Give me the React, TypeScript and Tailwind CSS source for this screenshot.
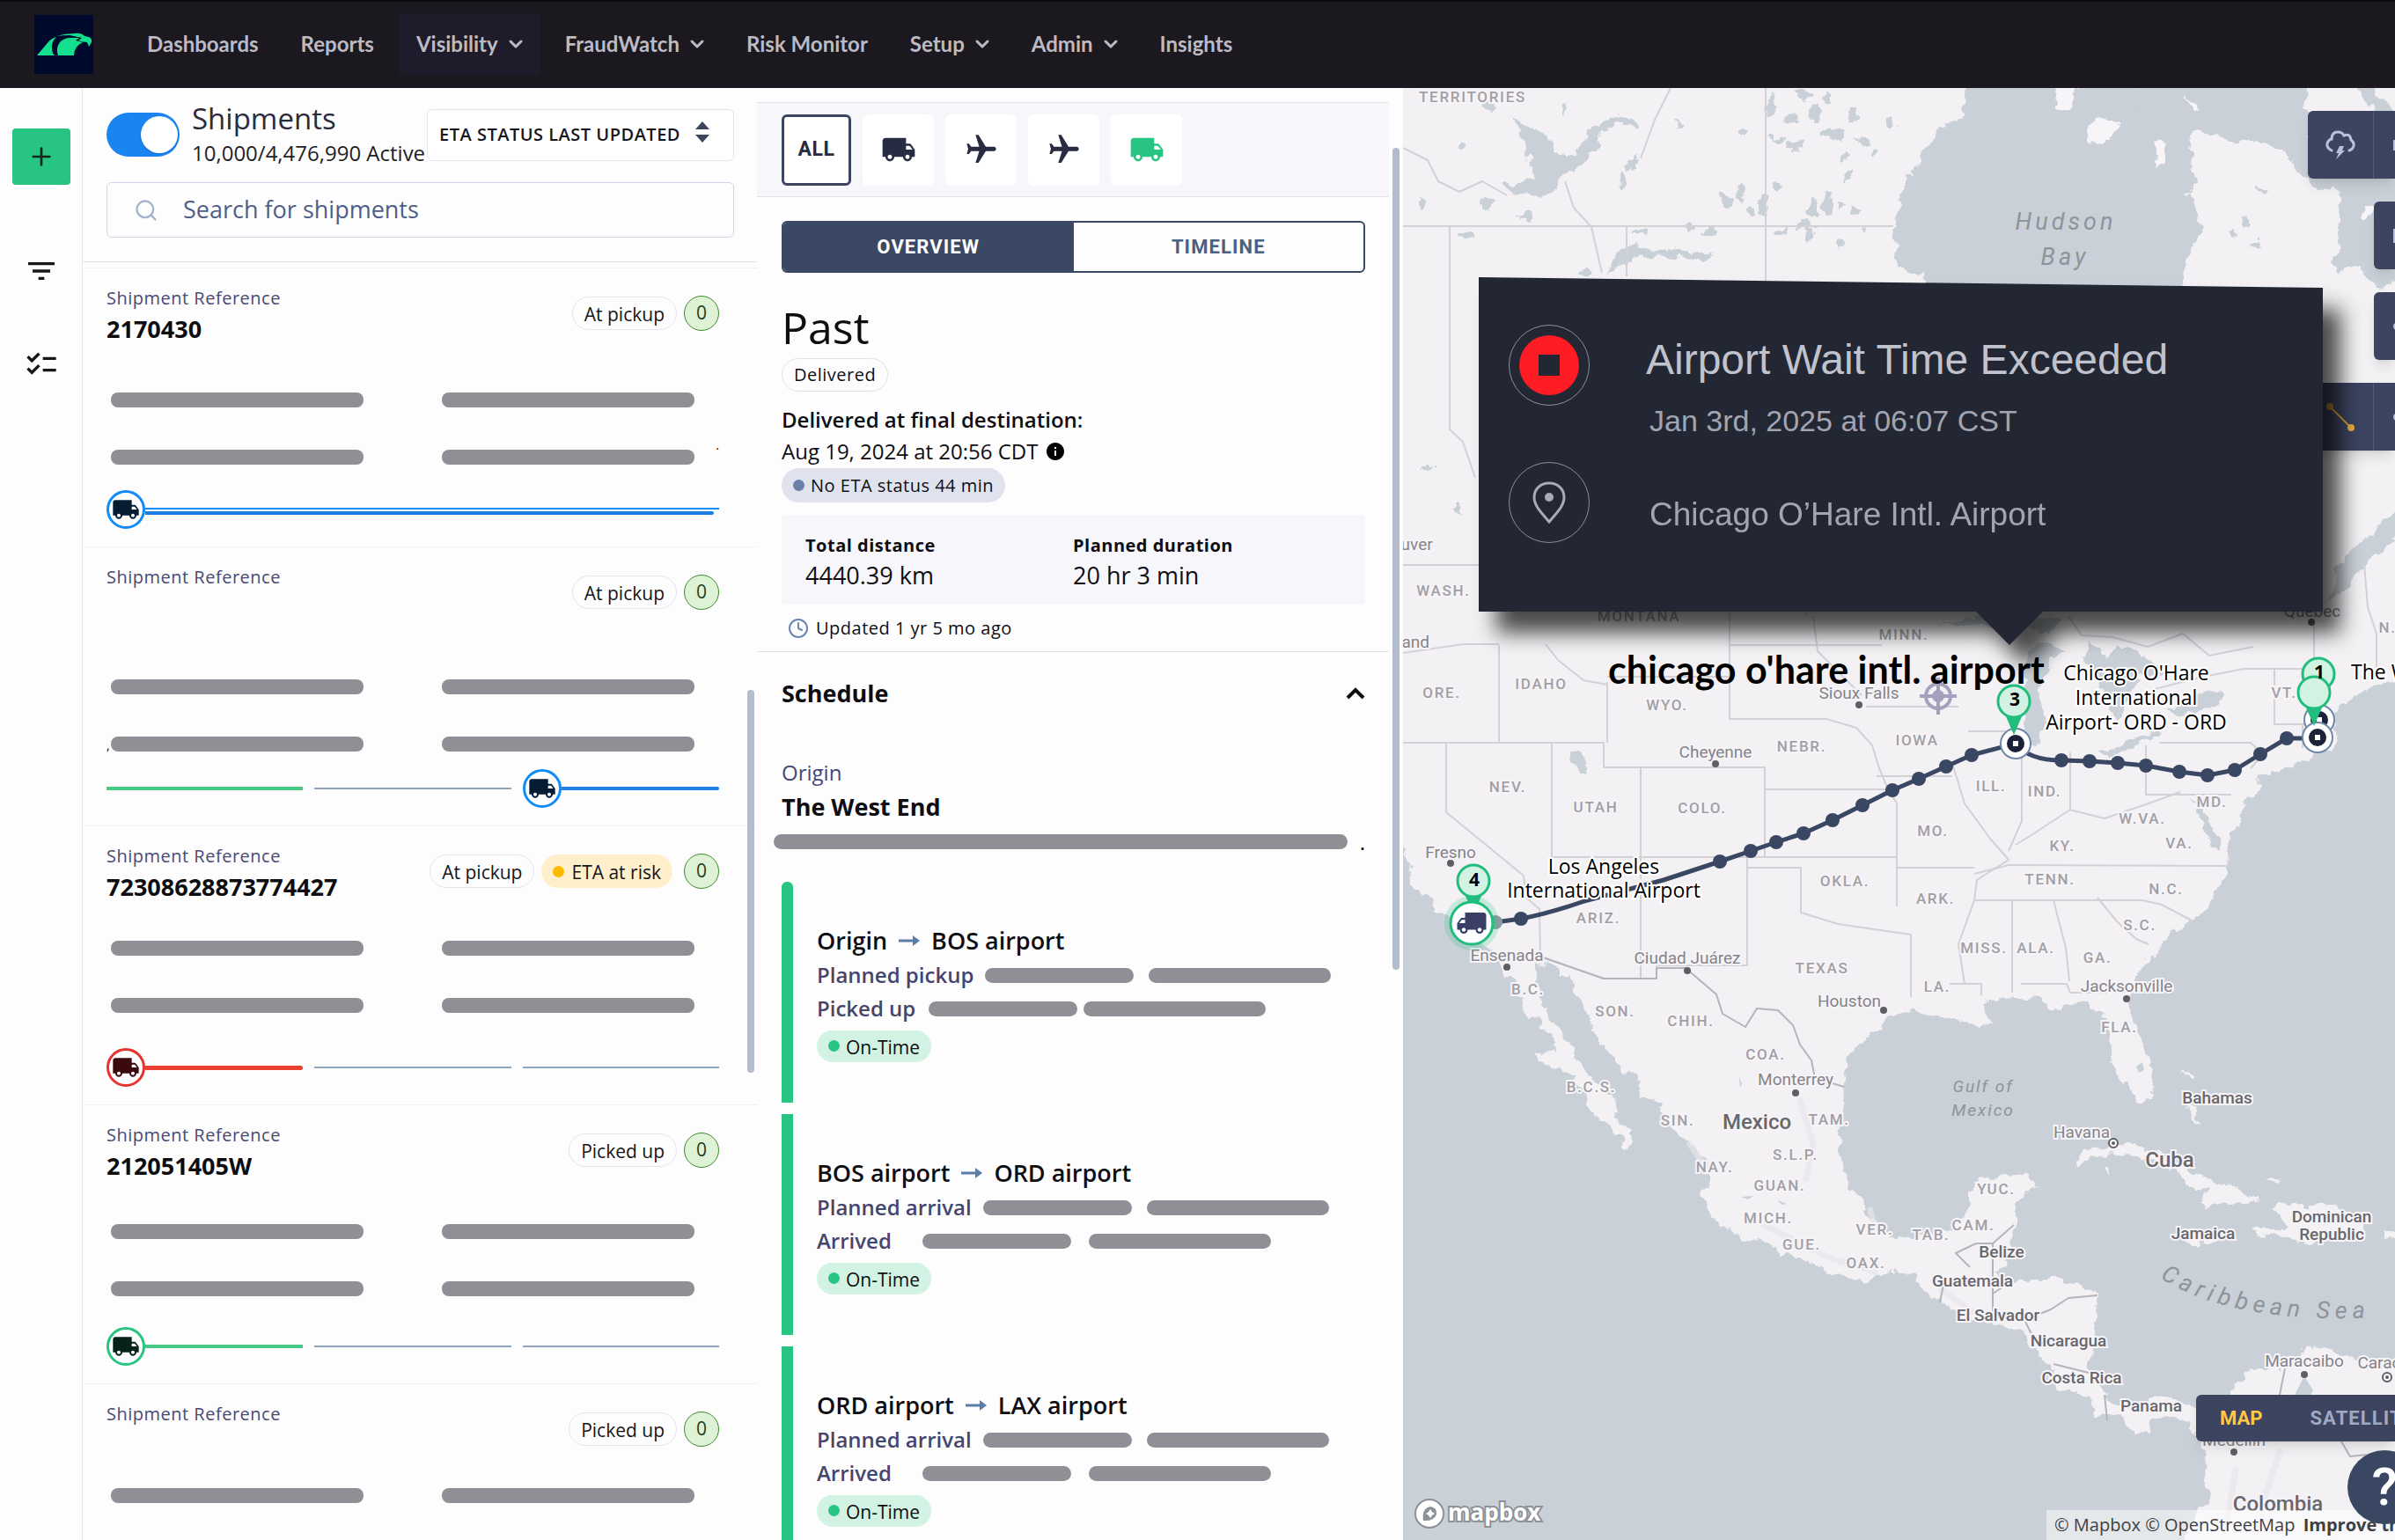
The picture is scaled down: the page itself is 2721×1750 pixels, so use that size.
import { ChevronDown, Clock4, Plus, Search } from 'lucide-react';
import { MdChecklist, MdFilterList, MdFlight, MdInfo, MdLocalShipping } from 'react-icons/md';

const navItems = [
  { label: 'Dashboards' },
  { label: 'Reports' },
  { label: 'Visibility', menu: true, active: true },
  { label: 'FraudWatch', menu: true },
  { label: 'Risk Monitor' },
  { label: 'Setup', menu: true },
  { label: 'Admin', menu: true },
  { label: 'Insights' },
];

type Tone = 'green' | 'blue' | 'blueDouble' | 'red' | 'idle';

const shipments: {
  id: string;
  status: string;
  risk?: boolean;
  offset: string;
  truckAt: number;
  truckRing: string;
  truckColor: string;
  segments: Tone[];
  lead?: string;
  tail?: string;
}[] = [
  {
    id: '2170430',
    status: 'At pickup',
    offset: 'mt-[54px]',
    truckAt: 0,
    truckRing: 'border-[#0f8cf8]',
    truckColor: 'text-[#051c33]',
    segments: ['blueDouble'],
    tail: '.',
  },
  {
    id: '',
    status: 'At pickup',
    offset: 'mt-[63px]',
    truckAt: 2,
    truckRing: 'border-[#0f8cf8]',
    truckColor: 'text-[#051c33]',
    segments: ['green', 'idle', 'blue'],
    lead: ',',
  },
  {
    id: '72308628873774427',
    status: 'At pickup',
    risk: true,
    offset: 'mt-[43px]',
    truckAt: 0,
    truckRing: 'border-[#e5332f]',
    truckColor: 'text-[#3a0a0e]',
    segments: ['red', 'idle', 'idle'],
  },
  {
    id: '212051405W',
    status: 'Picked up',
    offset: 'mt-[48px]',
    truckAt: 0,
    truckRing: 'border-[#28c481]',
    truckColor: 'text-[#06231b]',
    segments: ['green', 'idle', 'idle'],
  },
  {
    id: '',
    status: 'Picked up',
    offset: 'mt-[31px]',
    truckAt: 0,
    truckRing: 'border-[#28c481]',
    truckColor: 'text-[#06231b]',
    segments: ['green', 'idle', 'idle'],
  },
];

const legs = [
  {
    from: 'Origin',
    to: 'BOS airport',
    planned: 'Planned pickup',
    actual: 'Picked up',
    actualLabel: '',
    actualGap: 'gap-[7px]',
    round: 'rounded-t-md',
  },
  {
    from: 'BOS airport',
    to: 'ORD airport',
    planned: 'Planned arrival',
    actual: 'Arrived',
    actualLabel: 'min-w-[105px]',
    actualGap: 'gap-[20px]',
    round: '',
  },
  {
    from: 'ORD airport',
    to: 'LAX airport',
    planned: 'Planned arrival',
    actual: 'Arrived',
    actualLabel: 'min-w-[105px]',
    actualGap: 'gap-[20px]',
    round: '',
  },
];

function Logo() {
  return (
    <svg viewBox="0 0 67 67" className="h-[67px] w-[67px] bg-[#000a2c]" role="img" aria-label="Home">
      <path
        fill="#12e08e"
        d="M3 46 L14 33 Q18 27 25 25 Q19 31 20 38 Q20 43 23 46 Z M27 46 Q24 38 29 31 Q34 26 41 26 L51 26 L47 29 L55 31 Q45 36 45 46 Z M25 24 Q35 21 46 21 Q53 20 57 24 L62 25 Q66 27 65 31 L62 36 L60 31 Q55 31 50 29 L54 26 L40 23 Q32 23 25 24 Z"
      />
    </svg>
  );
}

function TopNav() {
  return (
    <header className="flex h-[100px] shrink-0 items-center bg-[#1b181f] pl-[39px] shadow-[inset_0_2px_0_#0c0b10]">
      <a href="#home" className="mr-[41px]">
        <Logo />
      </a>
      <nav className="flex items-center gap-2">
        {navItems.map((item) => (
          <a
            key={item.label}
            href={'#' + item.label}
            className={
              'flex h-[70px] items-center gap-2 rounded pl-5 font-[Lato,sans-serif] text-2xl font-bold text-[#bdbac4]' +
              (item.menu ? ' pr-4' : ' pr-5') +
              (item.active ? ' bg-[#1e1c2a]' : '')
            }
          >
            {item.label}
            {item.menu && <ChevronDown className="h-6 w-6" strokeWidth={3} />}
          </a>
        ))}
      </nav>
    </header>
  );
}

function Rail() {
  return (
    <aside className="flex flex-col items-center border-r border-[#e6e7ee] pt-[46px]">
      <button aria-label="Add" className="flex h-16 w-[66px] items-center justify-center rounded bg-[#28c481] text-[#12291f]">
        <Plus className="h-8 w-8" strokeWidth={2} />
      </button>
      <button aria-label="Filter" className="mt-[78px] text-[#17171b]">
        <MdFilterList className="h-10 w-10" />
      </button>
      <button aria-label="Tasks" className="mt-[66px] text-[#17171b]">
        <MdChecklist className="h-10 w-10" />
      </button>
    </aside>
  );
}

function Segment({ tone }: { tone: Tone }) {
  if (tone === 'idle') return <div className="h-[2px] flex-1 bg-[#5f7fa3]/70" />;
  if (tone === 'green') return <div className="h-1 flex-1 bg-[#45c985]" />;
  if (tone === 'red') return <div className="h-[5px] flex-1 rounded-r bg-[#ea3f31]" />;
  if (tone === 'blue') return <div className="h-1 flex-1 rounded-r bg-[#1f83e4]" />;
  return (
    <div className="flex flex-1 flex-col gap-[2px] pt-[3px]">
      <div className="h-[2px] bg-[#0f8cf8]" />
      <div className="mr-[6px] h-1 rounded-r bg-[#1a7fe4]" />
    </div>
  );
}

function ShipmentItem({ item }: { item: (typeof shipments)[number] }) {
  return (
    <li className="flex min-h-[317px] flex-col border-t border-[#f1f1f5] pt-5 pr-[43px] pb-[20px] pl-[27px]">
      <div className="flex min-h-[67px] items-start justify-between">
        <div>
          <div className="text-xl leading-7 tracking-wide text-[#4b4a74]">Shipment Reference</div>
          <div className="mt-[3px] text-[27px] leading-9 font-bold text-[#0d0d10]">{item.id}</div>
        </div>
        <div className="mt-[11px] flex items-center gap-2 text-[21px] text-[#151518]">
          <span className="flex h-[38px] items-center rounded-full border border-[#e3e4ee] px-[13px] pt-1">{item.status}</span>
          {item.risk && (
            <span className="mr-[5px] flex h-[38px] items-center gap-2 rounded-full bg-[#fff0cb] px-[13px] pt-1">
              <span className="mb-1 h-[13px] w-[13px] rounded-full bg-[#ffb800]" />
              ETA at risk
            </span>
          )}
          <span className="flex h-10 w-10 items-center justify-center rounded-full border border-[#3f8a2c] bg-[#def3d6] text-[#1f3d1b]">
            0
          </span>
        </div>
      </div>
      <div className={'flex flex-col gap-12 ' + item.offset}>
        {[0, 1].map((row) => (
          <div key={row} className="flex h-[17px] items-end">
            <span className="w-[5px] text-sm leading-none">{row === 1 && item.lead}</span>
            <div className="h-full flex-1 rounded-lg bg-[#918f95]" />
            <div className="w-[89px]" />
            <div className="h-full flex-1 rounded-lg bg-[#918f95]" />
            <span className="w-[28px] -translate-y-3 self-start text-right text-sm leading-none">{row === 1 && item.tail}</span>
          </div>
        ))}
      </div>
      <div className="mt-auto flex h-11 gap-[13px]">
        {item.segments.map((tone, i) => (
          <div key={i} className="flex flex-1 items-center">
            {item.truckAt === i && (
              <span className={'flex h-11 w-11 shrink-0 items-center justify-center rounded-full border-[3px] bg-white ' + item.truckRing}>
                <MdLocalShipping className={'h-8 w-8 ' + item.truckColor} />
              </span>
            )}
            <Segment tone={tone} />
          </div>
        ))}
      </div>
    </li>
  );
}

function ShipmentsPanel() {
  return (
    <section className="relative flex min-h-0 flex-col overflow-hidden">
      <div className="border-b border-[#dfe1ec] pt-[13px] pr-[26px] pb-[27px] pl-[27px]">
        <div className="flex items-center">
          <label className="shrink-0 cursor-pointer">
            <input type="checkbox" role="switch" aria-label="Shipments" defaultChecked className="peer sr-only" />
            <span className="flex h-[50px] w-[83px] items-center justify-end rounded-full bg-[#1a84f0] px-[2px]">
              <span className="h-[42px] w-[42px] rounded-full bg-white shadow" />
            </span>
          </label>
          <div className="ml-[14px] whitespace-nowrap">
            <h1 className="pt-[2px] text-[33px] leading-10 text-[#2b2b3c]">Shipments</h1>
            <div className="text-[24px] leading-[38px] text-[#1f1f25]">10,000/4,476,990 Active</div>
          </div>
          <div className="relative ml-auto w-[349px]">
            <select
              aria-label="Sort order"
              className="h-[59px] w-full appearance-none rounded-md border border-[#e1e3ee] bg-white pl-[13px] text-xl font-semibold tracking-wide text-[#16161c]"
            >
              <option>ETA STATUS LAST UPDATED</option>
            </select>
            <svg viewBox="0 0 16 24" className="pointer-events-none absolute top-[14px] right-7 h-6 w-4 fill-[#3b4560]">
              <path d="M8 0 L16 9 H0 Z M8 24 L16 15 H0 Z" />
            </svg>
          </div>
        </div>
        <label className="mt-[14px] flex h-[63px] items-center rounded-md border border-[#cfd5e6] pl-[30px]">
          <Search className="h-7 w-7 text-[#a3b3cc]" />
          <input
            type="search"
            aria-label="Search for shipments"
            placeholder="Search for shipments"
            className="ml-[28px] flex-1 bg-transparent text-[27px] outline-none placeholder:text-[#4d5f88]"
          />
        </label>
      </div>
      <ul className="pt-[6px]">
        {shipments.map((item, i) => (
          <ShipmentItem key={i} item={item} />
        ))}
      </ul>
      <div className="absolute top-[684px] right-[3px] h-[435px] w-2 rounded-full bg-[#b3bdcf]" />
    </section>
  );
}

function Arrow() {
  return (
    <svg viewBox="0 0 24 12" className="h-3 w-6">
      <path d="M0 6 H18" stroke="#5b7ca6" strokeWidth="3" />
      <path d="M16 0 L24 6 L16 12 Z" fill="#5b7ca6" />
    </svg>
  );
}

function DetailPanel() {
  const modeButton = 'flex h-[81px] w-[81px] items-center justify-center rounded-md bg-white text-[#272c42]';
  return (
    <section className="relative min-h-0 overflow-hidden pt-4 pr-4 text-[#0e0e12]">
      <div className="flex h-[108px] items-center gap-[13px] border-y border-[#e2e3eb] bg-[#f6f6fb] pl-7">
        <button className="h-[81px] w-[79px] rounded-md border-[3px] border-[#3b4560] bg-white font-[Roboto,sans-serif] text-[23px] font-bold tracking-wide text-[#272c42]">
          ALL
        </button>
        <button aria-label="Truck leg" className={modeButton}>
          <MdLocalShipping className="h-10 w-10" />
        </button>
        <button aria-label="First flight" className={modeButton}>
          <MdFlight className="h-10 w-10 rotate-90" />
        </button>
        <button aria-label="Second flight" className={modeButton}>
          <MdFlight className="h-10 w-10 rotate-90" />
        </button>
        <button aria-label="Final truck leg" className={modeButton}>
          <MdLocalShipping className="h-10 w-10 text-[#28c481]" />
        </button>
      </div>

      <div className="pr-[27px] pl-7">
        <div className="mt-[27px] flex h-[59px] overflow-hidden rounded-md border-2 border-[#3b4863] font-[Roboto,sans-serif] text-[22px] font-bold tracking-wider">
          <button className="flex-1 bg-[#3b4863] text-white">OVERVIEW</button>
          <button className="flex-1 text-[#4b6083]">TIMELINE</button>
        </div>

        <h2 className="mt-8 text-[50px] leading-[60px]">Past</h2>
        <span className="mt-[5px] flex h-[38px] w-fit items-center rounded-full border border-[#e0e1ea] px-[13px] text-xl tracking-wide">
          Delivered
        </span>
        <div className="mt-[14px] text-[24px] leading-9 font-semibold">Delivered at final destination:</div>
        <div className="flex items-center gap-2 text-[24px] leading-9">
          Aug 19, 2024 at 20:56 CDT
          <MdInfo className="h-6 w-6 text-black" />
        </div>
        <span className="mt-px flex h-[39px] w-fit items-center gap-[7px] rounded-full bg-[#e0e2ed] px-[13px] text-xl tracking-wide">
          <span className="h-[13px] w-[13px] rounded-full bg-[#6a80a8]" />
          No ETA status 44 min
        </span>

        <dl className="mt-[14px] grid grid-cols-[304fr_332fr] rounded bg-[#f6f6fb] py-[17px] pl-[27px]">
          <div>
            <dt className="text-xl leading-9 font-bold tracking-wide">Total distance</dt>
            <dd className="text-[27px] leading-8">4440.39 km</dd>
          </div>
          <div>
            <dt className="text-xl leading-9 font-bold tracking-wide">Planned duration</dt>
            <dd className="text-[27px] leading-8">20 hr 3 min</dd>
          </div>
        </dl>
        <div className="mt-[10px] flex items-center gap-2 pb-[9px] pl-[7px] text-xl leading-[34px] tracking-wide">
          <Clock4 className="h-6 w-6 text-[#6a86b0]" />
          Updated 1 yr 5 mo ago
        </div>
      </div>

      <div className="border-t border-[#e0e2ea] pr-[27px] pl-7">
        <div className="mt-[27px] flex items-center justify-between">
          <h3 className="text-[27px] leading-10 font-bold">Schedule</h3>
          <button aria-label="Collapse schedule">
            <svg viewBox="0 0 22 14" className="h-[14px] w-[22px]">
              <path d="M2 12 L11 3 L20 12" fill="none" stroke="#0e0e12" strokeWidth="4" />
            </svg>
          </button>
        </div>
        <div className="mt-[52px] text-[24px] leading-9 text-[#47467a]">Origin</div>
        <div className="text-[27px] leading-[42px] font-bold">The West End</div>
        <div className="-ml-[9px] flex h-[28px] items-center gap-[14px] pt-[9px]">
          <div className="h-[17px] flex-1 rounded-full bg-[#918f95]" />
          <span className="text-2xl leading-5">.</span>
        </div>

        <ol className="mt-9 flex flex-col gap-[13px]">
          {legs.map((leg) => (
            <li key={leg.to} className="flex min-h-[251px]">
              <div className={'w-[13px] bg-[#28c481] ' + leg.round} />
              <div className="ml-[27px] pt-[47px]">
                <div className="flex items-center gap-[13px] text-[27px] leading-10 font-semibold">
                  {leg.from}
                  <Arrow />
                  {leg.to}
                </div>
                <div className="flex items-center text-[24px] leading-[38px] font-semibold text-[#45456d]">
                  {leg.planned}
                  <div className="ml-[13px] h-[17px] w-[169px] rounded-full bg-[#918f95]" />
                  <div className="ml-[17px] h-[17px] w-[207px] rounded-full bg-[#918f95]" />
                </div>
                <div className="flex items-center gap-[15px] text-[24px] leading-[38px] font-semibold text-[#45456d]">
                  <span className={leg.actualLabel}>{leg.actual}</span>
                  <span className={'flex ' + leg.actualGap}>
                    <span className="h-[17px] w-[169px] rounded-full bg-[#918f95]" />
                    <span className="h-[17px] w-[207px] rounded-full bg-[#918f95]" />
                  </span>
                </div>
                <span className="mt-[6px] flex h-9 w-fit items-center gap-[7px] rounded-full bg-[#d2f3e4] px-[13px] pt-[3px] text-[21px]">
                  <span className="mb-1 h-[13px] w-[13px] rounded-full bg-[#28c481]" />
                  On-Time
                </span>
              </div>
            </li>
          ))}
        </ol>
      </div>
      <div className="absolute top-[68px] right-1 h-[934px] w-2 rounded-full bg-[#b1bdcc]" />
    </section>
  );
}

type Place = [string, number, number];

const stateLabels: Place[] = [
  ['TERRITORIES', 1673, 110], ['WASH.', 1640, 671], ['MONTANA', 1862, 700], ['MINN.', 2163, 721],
  ['ORE.', 1638, 787], ['IDAHO', 1751, 777], ['WYO.', 1894, 801], ['NEV.', 1713, 894],
  ['UTAH', 1813, 917], ['COLO.', 1934, 918], ['NEBR.', 2047, 848], ['IOWA', 2178, 841],
  ['ILL.', 2262, 893], ['IND.', 2323, 899], ['MO.', 2196, 944],
  ['OKLA.', 2096, 1001], ['ARK.', 2199, 1021], ['TENN.', 2329, 999], ['KY.', 2343, 961],
  ['W.VA.', 2434, 930], ['VA.', 2476, 958], ['MD.', 2513, 911], ['N.C.', 2461, 1010],
  ['S.C.', 2431, 1051], ['GA.', 2383, 1088], ['ALA.', 2313, 1077], ['MISS.', 2254, 1077],
  ['ARIZ.', 1816, 1043], ['TEXAS', 2070, 1100], ['VT.', 2595, 787], ['N.B.', 2722, 713],
  ['B.C.', 1736, 1124], ['SON.', 1835, 1149], ['CHIH.', 1921, 1160], ['COA.', 2006, 1198],
  ['LA.', 2201, 1121], ['FLA.', 2408, 1167], ['B.C.S.', 1808, 1235], ['SIN.', 1906, 1273],
  ['TAM.', 2078, 1272], ['S.L.P.', 2040, 1312], ['NAY.', 1948, 1326], ['GUAN.', 2022, 1347],
  ['MICH.', 2009, 1384], ['GUE.', 2047, 1414], ['VER.', 2130, 1397], ['TAB.', 2194, 1403],
  ['OAX.', 2120, 1435], ['YUC.', 2268, 1351], ['CAM.', 2242, 1392],
];

const cityLabels: Place[] = [
  ['Cheyenne', 1949, 854], ['Sioux Falls', 2112, 787], ['Fresno', 1648, 968], ['Ensenada', 1712, 1085],
  ['Ciudad Juárez', 1917, 1088], ['Jacksonville', 2416, 1120], ['Houston', 2101, 1137],
  ['Monterrey', 2040, 1226], ['Havana', 2365, 1286], ['Maracaibo', 2618, 1546], ['Caracas', 2713, 1548],
  ['Medellín', 2538, 1636], ['Vancouver', 1583, 618], ['Portland', 1588, 729], ['Québec', 2627, 694],
];

const cityDots = [
  [1949, 868], [2112, 801], [1648, 981], [1712, 1099], [1917, 1103], [2416, 1135],
  [2140, 1148], [2040, 1242], [2618, 1562], [2538, 1650], [2626, 707],
];

const countryLabels: Place[] = [
  ['Bahamas', 2519, 1247], ['Dominican', 2649, 1382], ['Republic', 2649, 1402], ['Jamaica', 2503, 1401],
  ['Belize', 2274, 1422], ['Guatemala', 2241, 1455], ['El Salvador', 2270, 1494],
  ['Nicaragua', 2350, 1523], ['Costa Rica', 2365, 1565], ['Panama', 2444, 1597],
];

const bigCountryLabels: Place[] = [['Mexico', 1996, 1275], ['Cuba', 2465, 1318], ['Colombia', 2588, 1709]];

const routeStops = [
  [1728, 1044], [1954, 979], [1989, 967], [2018, 957], [2049, 947], [2082, 932], [2116, 915],
  [2150, 898], [2180, 885], [2211, 871], [2240, 858], [2342, 864], [2374, 865], [2406, 867],
  [2438, 870], [2476, 877], [2508, 881], [2539, 875], [2568, 857], [2598, 839],
];

// x, y, width, height of the small northern lakes
const lakes = [
  [1662, 167, 10, 8], [1690, 120, 20, 12], [1616, 234, 9, 16], [1690, 230, 18, 16], [1734, 247, 18, 12],
  [1666, 268, 16, 10], [1779, 125, 6, 20], [1908, 143, 12, 12], [1979, 148, 10, 10], [2012, 122, 18, 30],
  [2035, 135, 20, 12], [2050, 108, 24, 10], [2062, 130, 16, 22], [2082, 152, 30, 16], [2040, 165, 26, 14],
  [2020, 158, 22, 8], [2105, 130, 10, 24], [2116, 160, 14, 10], [2150, 140, 12, 14], [2098, 178, 12, 10],
  [2076, 110, 10, 16], [2100, 198, 8, 22], [2130, 175, 10, 8], [1962, 226, 18, 20], [1979, 222, 8, 30],
  [2003, 232, 16, 30], [2020, 214, 14, 12], [1990, 240, 10, 12], [2060, 238, 16, 26], [2076, 232, 10, 30],
  [2050, 256, 22, 12], [2092, 236, 12, 8], [2024, 262, 18, 10], [1920, 258, 14, 12], [1865, 265, 16, 9],
  [2118, 262, 8, 12], [2108, 240, 12, 8], [1940, 262, 18, 8], [1844, 205, 9, 26], [1855, 185, 12, 24],
  [1802, 310, 16, 12], [2055, 266, 10, 14], [2090, 274, 8, 14], [2550, 254, 12, 14], [2562, 278, 20, 12],
  [2570, 218, 14, 8], [2540, 265, 9, 12], [2430, 110, 12, 16], [1622, 531, 12, 10], [1656, 578, 12, 16],
];

function lakePoints([x, y, w, h]: number[]) {
  const steps = 11;
  return Array.from({ length: steps }, (_, i) => {
    const angle = (i / steps) * Math.PI * 2;
    const wobble = 0.6 + 0.4 * Math.abs(Math.sin(x * 1.7 + y * 0.9 + i * 2.3));
    return `${Math.round(x + (Math.cos(angle) * w * wobble) / 2)},${Math.round(y + (Math.sin(angle) * h * wobble) / 2)}`;
  }).join(' ');
}

function Labels({ places, className }: { places: Place[]; className: string }) {
  return (
    <g className={className}>
      {places.map(([name, x, y]) => (
        <text key={name} x={x} y={y} textAnchor="middle" dominantBaseline="central">
          {name}
        </text>
      ))}
    </g>
  );
}

function Pin({ x, y }: { x: number; y: number }) {
  return (
    <g>
      <path d={`M${x - 10} ${y + 15} L${x} ${y + 38} L${x + 10} ${y + 15} Z`} fill="#20bd7c" />
      <circle cx={x} cy={y} r="18" fill="#d2f3e4" stroke="#20bd7c" strokeWidth="3" />
    </g>
  );
}

function StopMarker({ x, y }: { x: number; y: number }) {
  return (
    <g>
      <circle cx={x} cy={y} r="17" fill="#fff" stroke="#7088a8" strokeWidth="2" />
      <circle cx={x} cy={y} r="10" fill="#1c2238" />
      <rect x={x - 3} y={y - 3} width="6" height="6" fill="#fff" />
    </g>
  );
}

function MapCanvas() {
  return (
    <svg viewBox="1594 100 1127 1650" preserveAspectRatio="xMinYMin slice" className="h-full w-full bg-[#f3f1f4]">
      {/* Gives the coastlines their ragged edge */}
      <filter id="coast" x="-5%" y="-5%" width="110%" height="110%">
        <feTurbulence type="fractalNoise" baseFrequency="0.07" numOctaves="4" seed="4" />
        <feDisplacementMap in="SourceGraphic" scale="16" xChannelSelector="R" yChannelSelector="G" />
      </filter>

      {/* Northern water */}
      <g fill="#c9d0d7" filter="url(#coast)">
        <path d="M2236 80 L2232 128 L2214 141 L2203 151 L2185 168 L2178 188 L2167 204 L2158 225 L2153 249 L2153 274 L2156 306 L2185 310 L2189 330 L2481 330 L2479 310 L2488 286 L2502 261 L2492 233 L2484 221 L2495 208 L2493 188 L2487 168 L2492 151 L2520 155 L2542 163 L2571 159 L2580 166 L2590 168 L2606 185 L2617 203 L2635 214 L2660 217 L2658 240 L2656 262 L2658 287 L2650 306 L2656 312 L2664 302 L2680 302 L2692 318 L2702 327 L2740 313 L2740 200 L2680 200 L2624 170 L2624 128 L2616 118 L2622 108 L2610 80 Z" />
        <path d="M2664 80 L2690 90 L2712 118 L2721 136 L2700 128 L2686 112 Z" />
        <path d="M1716 129 L1734 143 L1760 157 L1763 174 L1788 174 L1806 151 L1821 137 L1842 132 L1864 139 L1864 146 L1838 140 L1817 151 L1814 172 L1792 192 L1770 204 L1767 217 L1745 223 L1716 219 L1705 210 L1745 204 L1738 180 L1727 155 Z" />
        <path d="M1824 312 L1832 294 L1850 274 L1868 282 L1925 286 L1945 288 L1934 294 L1871 292 L1842 300 Z" />
        {lakes.map((lake) => (
          <polygon key={lake.join()} points={lakePoints(lake)} />
        ))}
      </g>
      <g fill="#f7f5f7" filter="url(#coast)">
        <path d="M2333 90 H2361 L2350 125 L2339 122 Z" />
        <path d="M2480 110 L2497 122 L2490 126 Z" />
        <path d="M2380 135 L2394 133 L2409 138 L2402 151 L2384 167 L2372 160 L2372 150 Z" />
        <path d="M2449 158 L2463 163 L2460 184 L2451 192 L2446 176 Z" />
        <path d="M2686 234 L2694 236 L2692 246 L2684 248 Z" />
      </g>

      {/* Oceans and the Great Lakes */}
      <g fill="#c9d0d7" filter="url(#coast)">
        <path d="M1570 950 L1594 960 L1601 985 L1606 1010 L1626 1023 L1630 1037 L1650 1042 L1669 1053 L1690 1077 L1709 1100 L1720 1132 H1570 Z" />
        <path d="M1745 1095 L1770 1100 L1783 1130 H1745 Z" />
        <path d="M2750 768 L2694 782 L2672 790 L2657 807 L2650 823 L2654 843 L2648 852 L2630 857 L2608 870 L2578 880 L2567 882 L2565 897 L2553 913 L2546 933 L2535 947 L2531 970 L2530 990 L2520 1007 L2513 1020 L2492 1047 L2474 1053 L2456 1073 L2438 1093 L2423 1110 V1132 H2750 Z" />
        <path d="M2301 753 L2311 735 L2328 733 L2346 737 L2332 747 L2325 763 L2318 773 L2315 793 L2321 807 L2323 823 L2318 840 L2309 850 L2299 840 L2301 820 Z" />
        <path d="M2200 708 L2250 700 L2340 702 L2330 716 L2270 712 Z" />
        <path d="M2373 727 L2394 747 L2404 733 L2428 740 L2439 750 L2466 760 L2456 770 L2432 768 L2415 800 L2408 820 L2394 797 L2384 770 L2368 748 Z" />
        <path d="M2384 853 L2401 850 L2421 840 L2449 830 L2452 835 L2435 843 L2418 853 L2404 860 L2390 858 Z" />
        <path d="M2463 807 L2480 797 L2508 785 L2525 787 L2525 800 L2501 807 L2473 812 Z" />
        <path d="M1783 853 L1796 857 L1803 873 L1796 882 L1785 867 Z" />
        <path d="M2490 908 L2501 917 L2508 933 L2521 953 L2526 968 L2514 962 L2503 940 Z" />
        <path d="M2655 640 L2680 618 L2740 566 V596 L2690 640 L2668 664 L2648 684 Z" />
        <rect x="1570" y="1110" width="1180" height="670" />
      </g>

      {/* Mexico, Central America and the Caribbean */}
      <g fill="#f3f1f4" filter="url(#coast)">
        <path d="M1709 1090 L1723 1121 L1731 1146 L1745 1158 L1763 1179 L1767 1195 L1745 1196 L1756 1210 L1774 1214 L1785 1224 L1803 1237 L1806 1262 L1821 1274 L1839 1291 L1846 1304 L1855 1295 L1853 1282 L1835 1270 L1832 1249 L1817 1233 L1806 1224 L1792 1204 L1779 1179 L1759 1154 L1749 1133 L1745 1090 Z" />
        <path d="M1781 1090 L1788 1125 L1799 1146 L1814 1179 L1828 1193 L1842 1216 L1864 1228 L1862 1243 L1886 1253 L1889 1270 L1911 1291 L1933 1311 L1943 1336 L1943 1347 L1933 1359 L1943 1382 L1972 1403 L2005 1411 L2030 1425 L2059 1436 L2088 1450 L2120 1456 L2142 1446 L2153 1444 L2174 1452 L2196 1473 L2225 1492 L2261 1508 L2293 1508 L2301 1515 L2311 1535 L2333 1556 L2340 1577 L2376 1589 L2380 1606 L2391 1612 L2409 1610 L2427 1631 L2445 1628 L2441 1614 L2466 1610 L2484 1614 L2495 1635 L2506 1651 L2505 1680 L2510 1697 L2495 1718 L2464 1780 H2750 V1548 L2686 1544 L2658 1539 L2621 1527 L2611 1548 L2585 1554 L2557 1556 L2539 1573 L2535 1593 L2520 1614 L2492 1597 L2466 1585 L2441 1591 L2412 1602 L2391 1585 L2373 1560 L2376 1531 L2380 1494 L2383 1471 L2365 1461 L2333 1452 L2282 1456 L2268 1448 L2282 1427 L2286 1403 L2293 1390 L2293 1369 L2300 1357 L2311 1345 L2308 1334 L2282 1333 L2246 1340 L2239 1353 L2236 1374 L2218 1398 L2181 1405 L2153 1407 L2124 1382 L2117 1365 L2095 1336 L2089 1307 L2091 1266 L2095 1241 L2099 1224 L2095 1204 L2117 1183 L2138 1166 L2145 1154 L2167 1146 L2203 1154 L2225 1162 L2264 1164 L2254 1150 L2257 1137 L2282 1133 L2319 1135 L2326 1146 L2355 1141 L2373 1139 L2387 1154 L2394 1175 L2398 1199 L2412 1228 L2430 1253 L2443 1249 L2447 1220 L2441 1199 L2423 1158 L2418 1137 L2420 1117 L2430 1090 Z" />
        <path d="M2355 1326 L2365 1311 L2391 1305 L2409 1299 L2441 1303 L2470 1320 L2492 1332 L2520 1345 L2564 1361 L2557 1367 L2499 1369 L2506 1353 L2481 1345 L2474 1328 L2434 1316 L2398 1311 L2376 1316 L2362 1324 Z" />
        <path d="M2582 1371 L2600 1369 L2650 1369 L2686 1386 L2690 1403 L2658 1407 L2621 1415 L2600 1405 L2564 1403 L2560 1396 L2600 1396 Z" />
        <path d="M2474 1405 L2506 1403 L2528 1410 L2492 1415 Z" />
        <path d="M2708 1399 H2740 V1409 L2708 1408 Z" />
        <path d="M2484 1256 L2492 1258 L2497 1280 L2490 1272 Z M2390 1325 L2396 1327 L2393 1334 Z M2476 1220 L2490 1219 L2488 1224 Z M2577 1343 L2587 1337 L2585 1345 Z" />
      </g>
      <g fill="#c9d0d7">
        <path d="M2618 1564 L2628 1580 L2621 1593 L2607 1585 Z" />
        <path d="M2427 1212 L2434 1207 L2436 1216 L2430 1219 Z M1976 1224 L1979 1232 L1977 1236 Z M1978 1360 L1992 1359 L1986 1363 Z M2020 1364 L2030 1368 L2024 1369 Z" />
      </g>

      {/* Relief */}
      <g fill="none" stroke="#e7e5e9" strokeWidth="7" strokeLinecap="round" opacity="0.7">
        <path d="M1920 1300 L1940 1330 M2045 1250 L2060 1300 L2052 1340 M2000 1390 L2080 1430 L2130 1445 M2125 1375 L2130 1400 M2205 1465 L2240 1490 L2290 1500 M2540 1670 L2530 1730 M2590 1650 L2570 1710" />
      </g>

      {/* Borders and rivers */}
      <g fill="none" stroke="#d3d1d6" strokeWidth="2" strokeLinejoin="round">
        <path d="M1594 257 H2151 M2006 100 V319 M1848 257 V314 M1647 257 V488 L1662 502 L1676 543 M1594 642 H1680" />
        <path d="M1594 168 L1622 182 L1634 206 L1658 218 L1684 206 L1712 222 M1778 206 L1788 236 L1808 258 L1820 310 M1898 100 L1880 136 L1864 180" />
        <path d="M1594 742 L1662 732 H1703 M1703 733 V844 M1594 844 H1822 V872 H2005 V897 H2145 M1756 732 L1770 750 L1799 773 L1826 778 M1826 769 H1965 M1826 775 V844" />
        <path d="M1965 695 V817 H2075 L2109 827 L2127 847 L2135 873 L2145 897 L2155 913 V975 M1965 733 H2138 M1763 844 V974 H2155 M1864 872 V1112 M2005 897 V974" />
        <path d="M1643 844 V923 L1731 995 L1734 1020 L1749 1033 L1750 1087 M1985 975 V1097 H1882 V1112 H1822 L1750 1087 M1985 986 H2046 V1037 L2088 1050 L2171 1062 V1133" />
        <path d="M2155 975 V1030 M2155 986 H2243 M2120 803 H2225 M2132 882 H2218 M2236 831 H2300 M2218 867 L2232 913 L2261 953 L2282 977 L2246 1000 L2243 1023 L2225 1073 L2232 1118" />
        <path d="M2243 1023 H2434 L2456 1028 L2492 1047 M2286 1023 V1128 M2333 1023 L2347 1077 L2351 1115 M2383 1020 L2405 1047 L2427 1067 L2441 1073 M2243 993 L2282 983 L2530 984" />
        <path d="M2297 857 V933 L2282 967 M2352 855 V920 L2311 947 L2290 960 M2351 920 L2391 930 L2441 913 L2477 900 M2438 847 V903 H2535 M2453 844 H2557 L2571 857 L2557 873" />
        <path d="M2448 783 L2499 770 L2549 760 H2629 V700 M2584 760 V823 H2622 M2616 823 V850 M2350 700 L2365 722 L2400 724 L2440 735 L2480 720 L2510 745 L2560 735 M2686 640 L2690 690 L2700 720 V760" />
        <path d="M2215 1118 H2251 V1131 M2296 1118 H2348 L2352 1128 H2398 M2060 700 L2065 740 L2115 790 M2040 640 L2052 700" />
      </g>
      <g fill="none" stroke="#b5b4ba" strokeWidth="2" strokeLinejoin="round">
        <path d="M1750 1087 L1822 1112 H1882 V1100 H1915 L1950 1130 L1957 1152 L1983 1167 L1996 1146 L2020 1148 L2037 1165 L2045 1187 L2058 1205 L2062 1225 L2095 1235" />
        <path d="M2245 1413 H2264 V1490 M2264 1413 L2288 1392 M2245 1413 L2222 1424 L2238 1440 M2204 1480 L2208 1460 M2264 1470 L2282 1458 M2300 1500 L2330 1488 L2350 1475 L2383 1472 M2300 1500 L2310 1520 M2333 1550 L2373 1560 M2391 1585 L2394 1614 M2660 1638 L2670 1655 L2721 1650 M2596 1555 L2590 1585" />
      </g>

      <Labels places={stateLabels} className="fill-[#a19fa5] stroke-[#f6f4f7] stroke-[4px] font-[Roboto,sans-serif] text-[17px] font-medium tracking-widest [paint-order:stroke]" />
      <Labels places={cityLabels} className="fill-[#858389] stroke-[#f6f4f7] stroke-[4px] font-[Roboto,sans-serif] text-[19px] [paint-order:stroke]" />
      <Labels places={countryLabels} className="fill-[#68676c] stroke-[#f6f4f7] stroke-[4px] font-[Roboto,sans-serif] text-[19px] font-medium [paint-order:stroke]" />
      <Labels places={bigCountryLabels} className="fill-[#68676c] stroke-[#f6f4f7] stroke-[4px] font-[Roboto,sans-serif] text-[24px] font-medium [paint-order:stroke]" />
      <Labels
        places={[['Hudson', 2347, 252], ['Bay', 2346, 292]]}
        className="fill-[#8e949b] font-[Roboto,sans-serif] text-[27px] tracking-[4px] italic"
      />
      <Labels
        places={[['Gulf of', 2253, 1234], ['Mexico', 2253, 1261]]}
        className="fill-[#8e949b] font-[Roboto,sans-serif] text-[19px] tracking-[2px] italic"
      />
      <path id="caribbean" d="M2454 1452 Q2540 1508 2720 1496" fill="none" />
      <text className="fill-[#8e949b] font-[Roboto,sans-serif] text-[27px] tracking-[6px] italic">
        <textPath href="#caribbean">Caribbean Sea</textPath>
      </text>

      <g fill="#5f5e63">
        {cityDots.map(([x, y]) => (
          <circle key={x} cx={x} cy={y} r="4" />
        ))}
        {[[2401, 1299], [2712, 1565]].map(([x, y]) => (
          <g key={x}>
            <circle cx={x} cy={y} r="5" fill="#fff" stroke="#5f5e63" strokeWidth="2" />
            <circle cx={x} cy={y} r="2" />
          </g>
        ))}
      </g>

      {/* Crosshair */}
      <g stroke="#a3a1bb" strokeWidth="4" fill="none">
        <circle cx="2202" cy="791" r="14" />
        <path d="M2202 770 V812 M2181 791 H2223" />
        <circle cx="2202" cy="791" r="5" fill="#a3a1bb" />
      </g>

      {/* Route */}
      <path
        d="M1699 1048 L1728 1044 Q1760 1038 1800 1024 L1890 1000 L1954 979 L1989 967 L2018 957 L2049 947 L2082 932 L2116 915 L2150 898 L2180 885 L2211 871 L2240 858 L2290 845 Q2305 864 2342 864 L2374 865 L2406 867 L2438 870 L2476 877 L2508 881 L2539 875 L2568 857 L2598 839 H2633"
        fill="none"
        stroke="#3a4763"
        strokeWidth="5"
        strokeLinejoin="round"
      />
      <g fill="#3a4763">
        {routeStops.map(([x, y]) => (
          <circle key={x} cx={x} cy={y} r="8" />
        ))}
      </g>
      <StopMarker x={2290} y={845} />
      <Pin x={2288} y={797} />
      <StopMarker x={2635} y={818} />
      <StopMarker x={2633} y={838} />
      <Pin x={2634} y={766} />
      <Pin x={2629} y={787} />
      <Pin x={1674} y={1001} />
      <Labels places={[['3', 2289, 794], ['1', 2635, 763], ['4', 1675, 999]]} className="fill-black text-[21px] font-bold" />

      <circle cx="1699" cy="1048" r="8" fill="#8d99a3" />
      <circle cx="1672" cy="1049" r="31" fill="#28c481" opacity="0.2" />
      <circle cx="1672" cy="1049" r="24" fill="#fff" stroke="#20bd7c" strokeWidth="3" />
      <g transform="translate(1690 1031) scale(-1.5 1.5)" fill="#3b3f66">
        <path d="M20 8h-3V4H3c-1.1 0-2 .9-2 2v11h2c0 1.66 1.34 3 3 3s3-1.34 3-3h6c0 1.66 1.34 3 3 3s3-1.34 3-3h2v-5l-3-4zM6 18.5c-.83 0-1.5-.67-1.5-1.5s.67-1.5 1.5-1.5 1.5.67 1.5 1.5-.67 1.5-1.5 1.5zm13.5-9l1.96 2.5H17V9.5h2.5zm-1.5 9c-.83 0-1.5-.67-1.5-1.5s.67-1.5 1.5-1.5 1.5.67 1.5 1.5-.67 1.5-1.5 1.5z" />
      </g>

      <g className="fill-black stroke-white stroke-[4px] text-[23px] font-medium [paint-order:stroke]" textAnchor="middle">
        <text x="2427" y="773">Chicago O'Hare</text>
        <text x="2427" y="801">International</text>
        <text x="2427" y="829">Airport- ORD - ORD</text>
        <text x="1822" y="993">Los Angeles</text>
        <text x="1822" y="1020">International Airport</text>
        <text x="2671" y="772" textAnchor="start">The West End</text>
      </g>
      <text x="1827" y="777" className="fill-black font-[Lato,sans-serif] text-[43px] font-bold">
        chicago o'hare intl. airport
      </text>
    </svg>
  );
}

function MapTools() {
  const tool = 'flex h-[77px] items-center overflow-hidden rounded-l-md bg-[#3c4460] shadow-lg';
  return (
    <div className="absolute top-[26px] right-0 flex flex-col items-end gap-[26px]">
      <div className={tool}>
        <button aria-label="Weather" className="flex h-full w-[75px] items-center justify-center border-r border-[#555d7c]">
          <svg viewBox="0 0 34 34" className="h-[34px] w-[34px]" fill="none" stroke="#b9c0de" strokeWidth="3" strokeLinecap="round">
            <path d="M7 23 Q1 20 2 15 Q3 11 7 10 Q7 2 14 2 Q19 2 21 6 Q28 3 29 11 Q33 14 32 18 Q31 22 27 23" />
            <path d="M16 18 H21 L19 23 H22 L12 33 L15 26 H12 Z" fill="#b9c0de" stroke="none" />
          </svg>
        </button>
        <div className="w-6 pl-[22px]">
          <div className="h-3 w-4 bg-[#b9c0de]" />
        </div>
      </div>
      <button aria-label="Zoom" className={tool + ' w-6 pl-[22px]'}>
        <span className="h-4 w-4 shrink-0 bg-[#b9c0de]" />
      </button>
      <button aria-label="Layers" className={tool + ' w-6 pl-[22px]'}>
        <span className="h-2 w-4 shrink-0 rounded-full bg-[#b9c0de]" />
      </button>
      <div className={tool}>
        <button aria-label="Route line" className="flex h-full w-[75px] items-center justify-center border-r border-[#555d7c]">
          <svg viewBox="0 0 34 34" className="h-[34px] w-[34px]">
            <path d="M5 5 L29 29" stroke="#d9a23c" strokeWidth="2" />
            <circle cx="5" cy="5" r="4" fill="#b98a38" />
            <circle cx="29" cy="29" r="4" fill="#eab040" />
          </svg>
        </button>
        <div className="w-6 pl-[22px]">
          <div className="h-2 w-4 rounded-full bg-[#b9c0de]" />
        </div>
      </div>
    </div>
  );
}

function WaitTimeCallout() {
  return (
    <div className="absolute top-[215px] left-[86px] w-[959px] drop-shadow-[20px_24px_12px_rgba(0,0,0,0.7)]">
      <div className="h-[380px] bg-[#232733] pt-[54px] pl-[34px] font-['Liberation_Sans',Arial,sans-serif] [clip-path:polygon(0_0,100%_12px,100%_100%,0_100%)]">
        <div className="flex">
          <span className="flex h-[92px] w-[92px] items-center justify-center rounded-full border border-[#8c8f9b]">
            <span className="flex h-[68px] w-[68px] items-center justify-center rounded-full bg-[#ff1c24]">
              <span className="h-6 w-6 bg-[#232733]" />
            </span>
          </span>
          <div className="pl-[64px]">
            <div className="mt-[13px] text-[48px] leading-[54px] text-[#c0c3cd]">Airport Wait Time Exceeded</div>
            <div className="mt-[22px] pl-1 text-[34px] leading-10 text-[#a2a5b1]">Jan 3rd, 2025 at 06:07 CST</div>
          </div>
        </div>
        <div className="mt-[27px] flex items-center">
          <span className="flex h-[92px] w-[92px] items-center justify-center rounded-full border border-[#8c8f9b]">
            <svg viewBox="0 0 38 48" className="h-12 w-[38px]">
              <path d="M19 2 C9 2 2 9 2 18 C2 28 10 35 19 46 C28 35 36 28 36 18 C36 9 29 2 19 2 Z" fill="none" stroke="#a9acb8" strokeWidth="3" />
              <circle cx="19" cy="18" r="5" fill="#a9acb8" />
            </svg>
          </span>
          <div className="pt-7 pl-[68px] text-[37px] leading-10 text-[#a2a5b1]">Chicago O’Hare Intl. Airport</div>
        </div>
      </div>
      <div className="ml-[565px] h-[38px] w-[76px] bg-[#232733] [clip-path:polygon(0_0,100%_0,50%_100%)]" />
    </div>
  );
}

function MapPanel() {
  return (
    <section className="relative min-h-0 overflow-hidden">
      <MapCanvas />
      <MapTools />
      <WaitTimeCallout />

      <svg viewBox="0 0 150 40" className="absolute bottom-[10px] left-[13px] h-10 w-[150px]" role="img" aria-label="mapbox">
        <circle cx="17" cy="20" r="16" fill="#fff" stroke="#8d9298" strokeWidth="2" />
        <path d="M10 28 Q8 14 18 12 Q26 13 25 21 Q22 29 10 28 Z" fill="#8d9298" />
        <path d="M18 15 L20 18 L23 20 L20 22 L18 25 L16 22 L13 20 L16 18 Z" fill="#fff" />
        <text x="38" y="28" className="fill-white stroke-[#8d9298] stroke-[4px] font-['Open_Sans',sans-serif] text-[26px] font-bold [paint-order:stroke]">
          mapbox
        </text>
      </svg>

      <div className="absolute top-[1485px] right-0 flex h-[53px] w-[226px] items-center gap-[54px] overflow-hidden rounded-l-md bg-[#3c4460] pl-[27px] font-[Roboto,sans-serif] text-[22px] font-bold whitespace-nowrap shadow-lg">
        <button className="text-[#ffc845]">MAP</button>
        <button className="tracking-wider text-[#9fa9c6]">SATELLITE</button>
      </div>

      <div className="absolute right-0 bottom-0 h-[34px] w-[396px] overflow-hidden bg-white/50 pl-[9px] text-xl leading-[34px] whitespace-nowrap text-[#3f3f44]">
        <a href="#mapbox">© Mapbox</a> <a href="#osm">© OpenStreetMap</a>{' '}
        <a href="#improve" className="ml-1 font-bold">
          Improve this map
        </a>
      </div>

      <button
        aria-label="Help"
        className="absolute -right-[30px] bottom-[18px] h-[84px] w-[84px] rounded-full bg-[#3a4763] font-[Roboto,sans-serif] text-[60px] leading-[84px] font-medium text-white"
      >
        ?
      </button>
    </section>
  );
}

export default function App() {
  return (
    <div className="flex h-screen flex-col overflow-hidden bg-[#fdfdfe] font-['Open_Sans','Noto_Sans',sans-serif]">
      <TopNav />
      <main className="grid min-h-0 flex-1 grid-cols-[94px_minmax(0,766fr)_minmax(0,734fr)_minmax(0,1127fr)] grid-rows-[minmax(0,1fr)]">
        <Rail />
        <ShipmentsPanel />
        <DetailPanel />
        <MapPanel />
      </main>
    </div>
  );
}
